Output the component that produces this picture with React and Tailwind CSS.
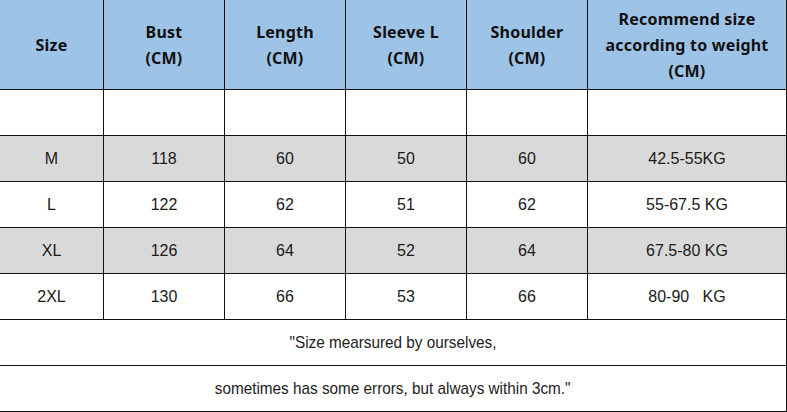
const headers = [
  ["Size"],
  ["Bust", "(CM)"],
  ["Length", "(CM)"],
  ["Sleeve L", "(CM)"],
  ["Shoulder", "(CM)"],
  ["Recommend size", "according to weight", "(CM)"],
];

const rows = [
  { cells: ["", "", "", "", "", ""], grey: false },
  { cells: ["M", "118", "60", "50", "60", "42.5-55KG"], grey: true },
  { cells: ["L", "122", "62", "51", "62", "55-67.5 KG"], grey: false },
  { cells: ["XL", "126", "64", "52", "64", "67.5-80 KG"], grey: true },
  { cells: ["2XL", "130", "66", "53", "66", "80-90\u00a0\u00a0\u00a0KG"], grey: false },
];

const cols = "grid grid-cols-[104px_121px_121px_121px_121px_199px]";

export default function App() {
  return (
    <div className="w-[787px] h-[412px] bg-white overflow-hidden">
      <div className={cols}>
        {headers.map((h, i) => (
          <div
            key={i}
            className="h-[90px] bg-[#9dc3e6] border-r border-b border-[#111] flex flex-col items-center justify-center text-[16px] leading-[26px] font-bold text-[#111] tracking-[0.2px]"
            style={{ fontFamily: '"Noto Sans", "Noto Sans CJK JP", sans-serif' }}
          >
            {h.map((t) => (
              <span key={t}>{t}</span>
            ))}
          </div>
        ))}
        {rows.map((r, ri) =>
          r.cells.map((c, ci) => (
            <div
              key={ri + "-" + ci}
              className={
                "h-[46px] border-r border-b border-[#111] flex items-center justify-center text-[16px] text-[#1a1a1a] font-['Liberation_Sans',Arial,sans-serif] " +
                (r.grey ? "bg-[#d9d9d9]" : "bg-white")
              }
            >
              {c}
            </div>
          ))
        )}
      </div>
      <div className="h-[46px] border-r border-b border-[#111] flex items-center justify-center text-[17px] text-[#222] font-['Liberation_Sans',sans-serif]">
        <span className="inline-block scale-x-[0.9]">"Size mearsured by ourselves,</span>
      </div>
      <div className="h-[46px] border-r border-b border-[#111] flex items-center justify-center text-[17px] text-[#222] font-['Liberation_Sans',sans-serif]">
        <span className="inline-block scale-x-[0.9]">sometimes has some errors, but always within 3cm."</span>
      </div>
    </div>
  );
}
